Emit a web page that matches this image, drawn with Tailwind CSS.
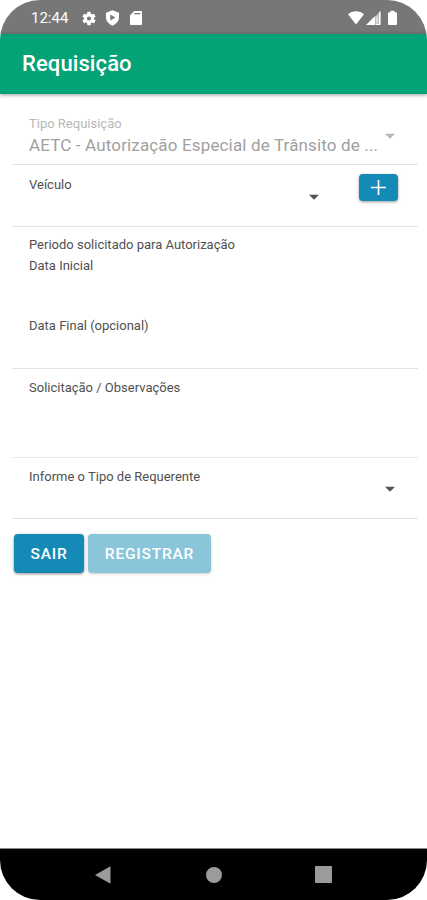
<!DOCTYPE html>
<html lang="pt-BR">
<head>
  <meta charset="UTF-8" />
  <meta name="viewport" content="width=device-width, initial-scale=1" />
  <title>Requisição</title>
  <script src="https://cdn.jsdelivr.net/npm/@tailwindcss/browser@4"></script>
</head>
<body class="bg-white font-[Roboto,sans-serif]">
  <div class="flex h-[900px] w-[427px] flex-col overflow-hidden rounded-[40px] bg-white">
    <!-- status bar -->
    <div class="flex h-[34px] shrink-0 items-center bg-[#777777] pt-0.5 pl-[31px] pr-[30px] text-white">
      <span class="w-[51px] text-[15px] leading-none whitespace-nowrap">12:44</span>
      <svg class="h-[15px] w-[14px]" viewBox="2 2 20 20" fill="currentColor"><path d="M19.14 12.94c.04-.3.06-.61.06-.94s-.02-.64-.07-.94l2.03-1.58a.5.5 0 0 0 .12-.61l-1.92-3.32a.5.5 0 0 0-.59-.22l-2.39.96a7 7 0 0 0-1.62-.94l-.36-2.54a.5.5 0 0 0-.48-.41h-3.84a.5.5 0 0 0-.47.41l-.36 2.54a7 7 0 0 0-1.62.94l-2.39-.96a.5.5 0 0 0-.59.22L2.74 8.87a.5.5 0 0 0 .12.61l2.03 1.58a6 6 0 0 0 0 1.88l-2.03 1.58a.5.5 0 0 0-.12.61l1.92 3.32c.12.22.37.29.59.22l2.39-.96c.5.38 1.03.7 1.62.94l.36 2.54c.05.24.24.41.48.41h3.84c.24 0 .44-.17.47-.41l.36-2.54a7 7 0 0 0 1.62-.94l2.39.96c.22.08.47 0 .59-.22l1.92-3.32a.5.5 0 0 0-.12-.61zM12 15a3 3 0 1 1 0-6 3 3 0 0 1 0 6z"/></svg>
      <svg class="ml-[9px] h-4 w-[15px]" viewBox="0 0 15 16" fill="currentColor" fill-rule="evenodd"><path d="M7.500.3 14 2.700v4.600c0 3.700-2.800 7-6.500 8.400C3.800 14.300 1 11 1 7.300V2.700zM5.300 4.600v6l5-3z"/></svg>
      <svg class="ml-[10px] h-4 w-3" viewBox="0 0 12 16" fill="currentColor" fill-rule="evenodd"><path d="M4.300 1H11a1 1 0 0 1 1 1v12a1 1 0 0 1-1 1H1a1 1 0 0 1-1-1V5.200zM4.300 3v1.300h6V3z"/></svg>
      <svg class="ml-auto h-4 w-4" viewBox="0 0 16 16" fill="currentColor"><path d="M0 4.300C4.500.2 11.500.2 16 4.300L8 14.500z"/></svg>
      <svg class="ml-0.5 h-4 w-[15px]" viewBox="0 0 15 16" fill="currentColor"><path d="M0 15 14.500 1v14z" fill-opacity=".5"/><path d="M0 15 9 6.300V15zM13 2.400 14.500 1v14H10v-1.300h3zM10.500 6.500h1v6h-1z"/></svg>
      <svg class="ml-[7px] h-4 w-[9px]" viewBox="0 0 9 16" fill="currentColor"><path d="M2.500.8h4v1.500H8a1 1 0 0 1 1 1V14a1 1 0 0 1-1 1H1a1 1 0 0 1-1-1V3.300a1 1 0 0 1 1-1h1.500z"/></svg>
    </div>

    <!-- toolbar -->
    <header class="flex h-[60px] shrink-0 items-center bg-[#04a277] pb-[2px] pl-[22px] shadow-[0_1px_4px_rgba(0,0,0,0.4)]">
      <h1 class="text-[22px] font-medium tracking-[0.1px] text-white">Requisição</h1>
    </header>

    <!-- form -->
    <main class="flex-1 pl-3 pr-[9px] text-[13px] leading-[16px] text-[#505050]">
      <div class="flex h-[71px] border-b border-[#e2e2e2] pl-[17px] pt-[22px] text-[#a0a0a0]">
        <div class="w-[349px]">
          <div class="text-[#b8b8b8]">Tipo Requisição</div>
          <div class="mt-[2px] text-[17px] leading-[22px] tracking-[0.15px] whitespace-nowrap">AETC - Autorização Especial de Trânsito de ...</div>
        </div>
        <svg class="mt-[17px] ml-[7px] h-[6px] w-[10px]" viewBox="0 0 11 6" fill="#b8b8b8"><path d="M0 .5h11L5.500 6z"/></svg>
      </div>

      <div class="flex h-[62px] items-start border-b border-[#e2e2e2] pl-[17px] pt-[9px]">
        <div class="w-[280px] pt-[3px]">Veículo</div>
        <svg class="mt-[20px] h-[6px] w-[10px]" viewBox="0 0 11 6" fill="#555"><path d="M0 .5h11L5.500 6z"/></svg>
        <button class="ml-[40px] flex h-[27px] w-[39px] items-center justify-center rounded-[4px] bg-[#168ab6] pr-px shadow-[0_1px_3px_rgba(0,0,0,0.4)]" aria-label="Adicionar veículo">
          <svg class="h-[15px] w-[15px]" viewBox="0 0 15 15" stroke="#fff" stroke-width="1.700"><path d="M7.500 0v15M0 7.500h15"/></svg>
        </button>
      </div>

      <div class="h-[142px] border-b border-[#e2e2e2] pl-[17px] pt-[10px]">
        <div>Periodo solicitado para Autorização</div>
        <div class="mt-[5px]">Data Inicial</div>
        <div class="mt-[44px]">Data Final (opcional)</div>
      </div>

      <div class="h-[89px] border-b border-[#e8e8e8] pl-[17px] pt-[11px]">Solicitação / Observações</div>

      <div class="flex h-[61px] items-start border-b border-[#e2e2e2] pl-[17px] pt-[11px]">
        <div class="w-[356px]">Informe o Tipo de Requerente</div>
        <svg class="mt-[17px] h-[6px] w-[10px]" viewBox="0 0 11 6" fill="#555"><path d="M0 .5h11L5.500 6z"/></svg>
      </div>

      <div class="flex gap-[4px] pl-[2px] pt-[15px] text-[15.5px] font-medium tracking-[0.8px] text-white">
        <button class="h-[39px] w-[70px] rounded-[4px] bg-[#168ab6] shadow-[0_1px_3px_rgba(0,0,0,0.45)]">SAIR</button>
        <button class="h-[39px] w-[123px] rounded-[4px] bg-[#8bc5da] shadow-[0_1px_3px_rgba(0,0,0,0.2)]">REGISTRAR</button>
      </div>
    </main>

    <!-- navigation bar -->
    <nav class="flex h-[52px] shrink-0 items-center border-t border-[#888888] bg-black pl-[95px]">
      <svg class="h-[18px] w-4" viewBox="0 0 16 18" fill="#9b9b9b"><path d="M0 9 15.500.300v17.400z"/></svg>
      <div class="ml-[95px] h-4 w-4 rounded-full bg-[#9b9b9b]"></div>
      <div class="ml-[93px] h-[17px] w-[17px] rounded-[1px] bg-[#9b9b9b]"></div>
    </nav>
  </div>
</body>
</html>
